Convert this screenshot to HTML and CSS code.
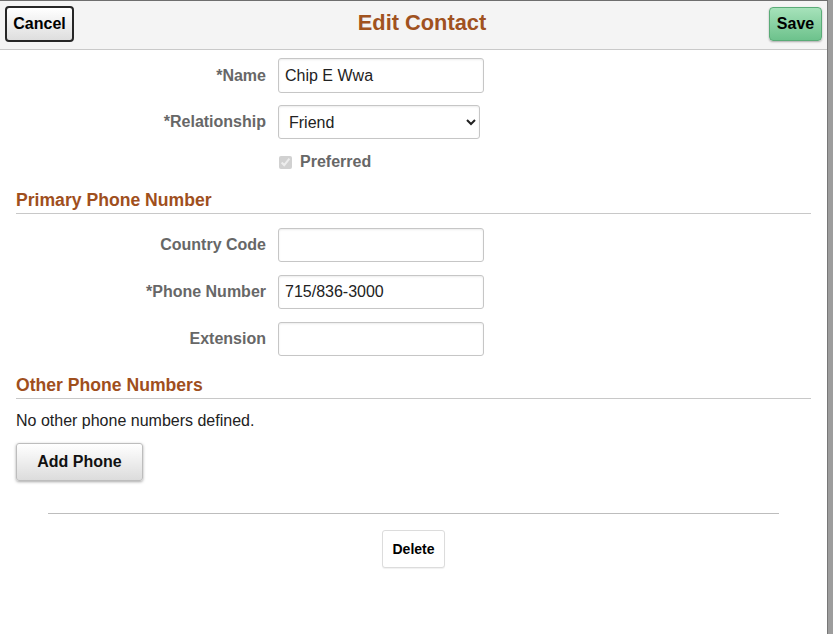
FILE: index.html
```html
<!DOCTYPE html>
<html lang="en">
<head>
<meta charset="utf-8">
<title>Edit Contact</title>
<link rel="stylesheet" href="styles.css">
</head>
<body>
<div class="page">
  <div class="dialog">
    <header class="bar">
      <button class="btn-cancel" type="button">Cancel</button>
      <h1 class="title">Edit Contact</h1>
      <button class="btn-save" type="button">Save</button>
    </header>
    <main class="content">
      <div class="row row-name">
        <label class="lbl">*Name</label>
        <input class="field" type="text" value="Chip E Wwa">
      </div>
      <div class="row">
        <label class="lbl">*Relationship</label>
        <select class="field select">
          <option>Friend</option>
        </select>
      </div>
      <div class="row check-row">
        <span></span>
        <label class="check"><input type="checkbox" checked disabled><span>Preferred</span></label>
      </div>

      <h2 class="section first">Primary Phone Number</h2>
      <div class="row">
        <label class="lbl">Country Code</label>
        <input class="field" type="text" value="">
      </div>
      <div class="row">
        <label class="lbl">*Phone Number</label>
        <input class="field" type="text" value="715/836-3000">
      </div>
      <div class="row">
        <label class="lbl">Extension</label>
        <input class="field" type="text" value="">
      </div>

      <h2 class="section second">Other Phone Numbers</h2>
      <p class="empty">No other phone numbers defined.</p>
      <button class="btn-add" type="button">Add Phone</button>

      <hr class="sep">
      <div class="del-wrap">
        <button class="btn-delete" type="button">Delete</button>
      </div>
    </main>
  </div>
  <div class="backdrop"></div>
</div>
</body>
</html>
```

FILE: styles.css
```css
* { box-sizing: border-box; }
html, body {
  margin: 0;
  padding: 0;
  height: 100%;
}
body {
  font-family: "Liberation Sans", Arial, sans-serif;
  background: #9c9c9c;
  overflow: hidden;
}
.page {
  display: flex;
  height: 634px;
}
.dialog {
  width: 828px;
  height: 634px;
  background: #fff;
  border-top: 1px solid #6e6e6e;
  border-right: 1px solid #777;
  display: flex;
  flex-direction: column;
}
.backdrop {
  flex: 1;
  background: #9d9d9d;
}
.bar {
  height: 49px;
  background: #f4f4f4;
  border-bottom: 1px solid #c9c9c9;
  display: flex;
  align-items: flex-start;
  justify-content: space-between;
  padding: 5px 5px 0 5px;
  position: relative;
}
.btn-cancel {
  width: 69px;
  height: 36px;
  border: 2px solid #262626;
  border-radius: 4px;
  background: linear-gradient(#ffffff, #dedede);
  font: bold 16px "Liberation Sans", Arial, sans-serif;
  color: #000;
  padding: 0;
  margin: 0;
}
.title {
  margin: 0;
  font-size: 21.8px;
  font-weight: bold;
  color: #a0521f;
  line-height: 34px;
  position: absolute;
  left: 0;
  right: 0;
  top: 5px;
  text-align: center;
  padding-left: 17px;
  pointer-events: none;
}
.btn-save {
  width: 53px;
  height: 34px;
  margin-top: 1px;
  border: 1px solid #5aab77;
  border-radius: 4px;
  background: linear-gradient(#a6e2ba, #6dc28c);
  box-shadow: 0 1px 2px rgba(0,0,0,0.3);
  font: bold 16px "Liberation Sans", Arial, sans-serif;
  color: #000;
  padding: 0;
}
.content {
  padding: 8px 16px 0 16px;
  display: flex;
  flex-direction: column;
}
.row {
  display: grid;
  grid-template-columns: 250px auto;
  column-gap: 12px;
  align-items: center;
  margin-bottom: 13px;
}
.row-name { margin-bottom: 12px; }
.lbl {
  text-align: right;
  font-weight: bold;
  font-size: 16px;
  color: #676767;
}
.field {
  width: 206px;
  height: 34px;
  border: 1px solid #c6c6c6;
  border-radius: 3px;
  box-shadow: inset 0 1px 2px rgba(0,0,0,0.08);
  font: 16px "Liberation Sans", Arial, sans-serif;
  color: #222;
  padding: 0 6px;
  background: #fff;
  margin: 0;
}
.row-name .field { height: 35px; }
.select {
  width: 202px;
  padding: 0 6px 0 6px;
}
.check-row {
  margin-top: -1px;
  margin-bottom: 0;
  height: 22px;
}
.check {
  display: flex;
  align-items: center;
  gap: 8px;
  font-weight: bold;
  font-size: 16px;
  color: #676767;
}
.check input {
  margin: 0 0 0 1px;
  width: 13px;
  height: 13px;
}
.section {
  margin: 0;
  font-size: 17.6px;
  font-weight: bold;
  color: #9f4f1d;
  line-height: 22px;
  border-bottom: 1px solid #c8c8c8;
  padding-bottom: 2px;
}
.section.first { margin-top: 16px; margin-bottom: 14px; }
.section.second { margin-top: 5px; }
.empty {
  margin: 13px 0 0 0;
  font-size: 16px;
  line-height: 18px;
  color: #222;
}
.btn-add {
  align-self: flex-start;
  margin-top: 13px;
  width: 127px;
  height: 38px;
  border: 1px solid #bdbdbd;
  border-radius: 3px;
  background: linear-gradient(#ffffff, #dcdcdc);
  box-shadow: 0 1px 3px rgba(0,0,0,0.35);
  font: bold 16px "Liberation Sans", Arial, sans-serif;
  color: #111;
  padding: 0;
}
.sep {
  margin: 32px 32px 0 32px;
  border: 0;
  border-top: 1px solid #bdbdbd;
  height: 0;
}
.del-wrap {
  display: flex;
  justify-content: center;
  margin-top: 16px;
}
.btn-delete {
  width: 63px;
  height: 38px;
  border: 1px solid #dcdcdc;
  border-radius: 3px;
  background: #fff;
  box-shadow: 0 1px 1px rgba(0,0,0,0.06);
  font: bold 14px "Liberation Sans", Arial, sans-serif;
  color: #000;
  padding: 0;
}
```
